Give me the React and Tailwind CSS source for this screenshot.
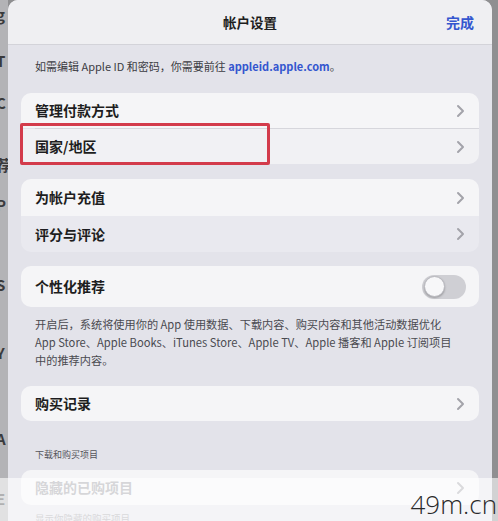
import React from 'react';

const font = "font-['Noto_Sans_CJK_SC','Noto_Sans',sans-serif]";

const Chevron = () => (
  <svg className="h-[14px] w-[9px] text-[#a3a3aa]" viewBox="0 0 9 14" fill="none" stroke="currentColor">
    <path d="M2 2l5 5-5 5" strokeWidth={2} strokeLinecap="round" strokeLinejoin="round" />
  </svg>
);

const Row = ({ label, bg = 'bg-[#f5f5f7]', muted = false, h = 'h-[36px]' }) => (
  <div className={`flex ${h} items-center justify-between pl-[14px] pr-[14px] ${bg}`}>
    <span className={`text-[14px] font-bold ${muted ? 'text-[#9a9aa0]' : 'text-[#1d1d20]'}`}>{label}</span>
    <Chevron />
  </div>
);

const Toggle = () => (
  <div className="flex h-[24px] w-[44px] items-center rounded-full bg-[#cfcfd4] p-[2px]">
    <div className="h-[21px] w-[21px] rounded-full border border-[#b8b8be] bg-[#f7f7f9] shadow-[0_1px_2px_rgba(0,0,0,0.25)]" />
  </div>
);

export default function App() {
  const edge = ['g', 'T', 'C', '荐', 'P', 'S', 'Y', 'A', 'E'];
  const edgeGaps = ['mt-[6px]', 'mt-[28px]', 'mt-[24px]', 'mt-[44px]', 'mt-[22px]', 'mt-[62px]', 'mt-[50px]', 'mt-[68px]', 'mt-[42px]'];

  return (
    <div className={`relative flex h-[521px] w-[498px] overflow-hidden bg-[#8f8f91] ${font}`}>
      {/* background iPad edge */}
      <div className="flex w-[8px] flex-col overflow-hidden bg-[#b3b3b6]">
        {edge.map((c, i) => (
          <span key={i} className={`${edgeGaps[i]} -ml-[4px] text-[15px] leading-[18px] font-bold text-[#3a3a3c]`}>{c}</span>
        ))}
      </div>

      {/* sheet */}
      <div className="flex w-[484px] flex-col overflow-hidden rounded-t-[10px] bg-[#e3e3ea]">
        <div className="relative flex h-[45px] shrink-0 items-center justify-center border-b border-[#d3d3d9] bg-[#efeff2]">
          <span className="text-[13.5px] font-bold text-[#1d1d20]">帐户设置</span>
          <span className="absolute right-[18px] text-[14px] font-bold text-[#3456cf]">完成</span>
        </div>

        <div className="flex flex-col px-[13px]">
          <p className="mt-[14px] pl-[14px] text-[11px] leading-[14px] whitespace-nowrap text-[#3c3c43]">
            如需编辑 Apple ID 和密码，你需要前往 <span className="font-bold text-[#3456cf]">appleid.apple.com</span>。
          </p>

          <div className="relative mt-[20px] overflow-hidden rounded-[10px]">
            <Row label="管理付款方式" h="h-[35px]" />
            <div className="ml-[14px] h-px bg-[#d6d6dc]" />
            <Row label="国家/地区" bg="bg-[#f1f1f4]" h="h-[35px]" />
          </div>

          <div className="mt-[15px] overflow-hidden rounded-[10px]">
            <Row label="为帐户充值" h="h-[37px]" />
            <Row label="评分与评论" bg="bg-[#e9e9ef]" h="h-[36px]" />
          </div>

          <div className="mt-[14px] flex h-[41px] items-center justify-between rounded-[10px] bg-[#f5f5f7] pl-[14px] pr-[13px]">
            <span className="text-[14px] font-bold text-[#1d1d20]">个性化推荐</span>
            <Toggle />
          </div>

          <p className="mt-[8px] pl-[14px] text-[11.2px] leading-[18px] whitespace-nowrap text-[#4a4a50]">
            开启后，系统将使用你的 App 使用数据、下载内容、购买内容和其他活动数据优化
            <br />
            App Store、Apple Books、iTunes Store、Apple TV、Apple 播客和 Apple 订阅项目
            <br />
            中的推荐内容。
          </p>

          <div className="mt-[17px] overflow-hidden rounded-[10px]">
            <Row label="购买记录" h="h-[35px]" />
          </div>

          <p className="mt-[27px] pl-[14px] text-[9px] leading-[14px] text-[#55555b]">下载和购买项目</p>

          <div className="mt-[8px] overflow-hidden rounded-[10px]">
            <Row label="隐藏的已购项目" muted h="h-[35px]" />
          </div>

          <p className="mt-[6px] pl-[14px] text-[9.5px] leading-[14px] text-[#a0a0a6]">显示你隐藏的购买项目</p>
        </div>
      </div>

      <div className="flex-1 bg-[#8f8f91]" />

      {/* highlight box */}
      <div className="pointer-events-none absolute left-[20px] top-[123px] h-[42px] w-[250px] rounded-[2px] border-[3px] border-[#d33b4b]" />

      {/* watermark band */}
      <div className="pointer-events-none absolute bottom-0 left-0 flex h-[43px] w-full items-end justify-end bg-white/60 pr-[1px]">
        <span className="font-['Open_Sans',sans-serif] text-[26px] font-light leading-[34px] text-[#2a2a2a]">49m.cn</span>
      </div>
    </div>
  );
}
